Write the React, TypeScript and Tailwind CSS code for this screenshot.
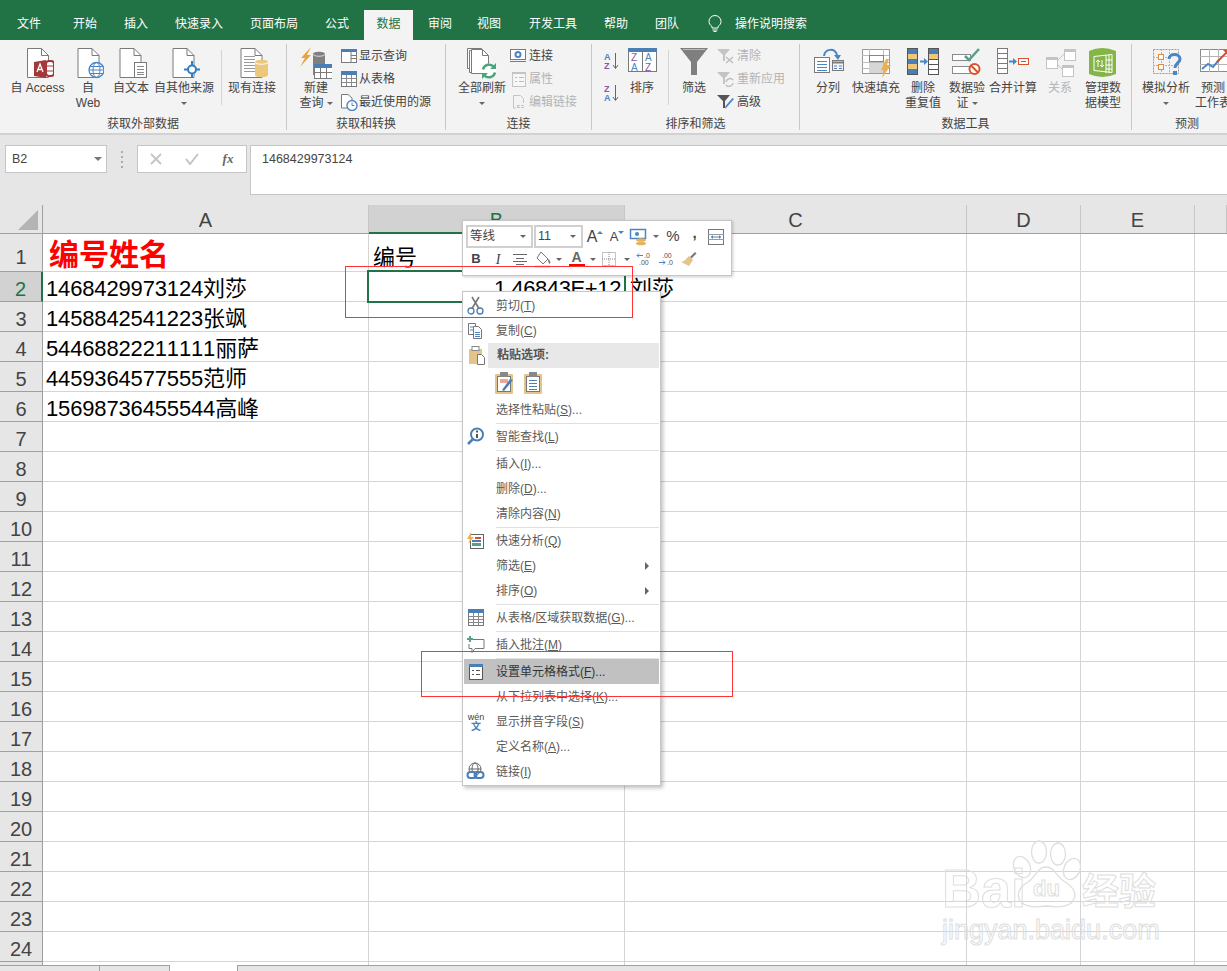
import React from 'react';

const font = "Liberation Sans";

const Svg = ({ w = 32, h = 32, children }: { w?: number; h?: number; children: React.ReactNode }) => (
  <svg width={w} height={h} viewBox={`0 0 ${w} ${h}`} fill="none" className="shrink-0 block">
    {children}
  </svg>
);

const Caret = () => (
  <span className="inline-block w-0 h-0 border-x-[3px] border-t-[3px] border-x-transparent border-t-[#666] align-middle" />
);

// page outline used by the "get data" icons
const Page = ({ x = 5.5, w = 21 }: { x?: number; w?: number }) => (
  <>
    <path d={`M${x} 1.5H${x + w - 7}L${x + w} 8.5V30.5H${x}Z`} fill="#fff" stroke="#7a7a7a" />
    <path d={`M${x + w - 7} 1.5V8.5H${x + w}`} stroke="#7a7a7a" />
  </>
);

const lines = (x: number, x2: number, ys: number[], color = '#4a86c5') =>
  ys.map((y) => <path key={y} d={`M${x} ${y}.5H${x2}`} stroke={color} />);

const IconAccess = () => (
  <Svg>
    <Page />
    <rect x="24" y="14" width="8" height="15" rx="3" fill="#fff" stroke="#a4373a" strokeWidth="2" />
    <path d="M24 19h8M24 24h8" stroke="#a4373a" />
    <path d="M12 15l12-2v18l-12-2z" fill="#a4373a" />
    <path d="M15 25l3-8 3 8M16 22.500h4" stroke="#fff" strokeWidth="1.300" />
  </Svg>
);
const IconWeb = () => (
  <Svg>
    <Page x={6} />
    <circle cx="24.500" cy="23" r="7.500" fill="#fff" stroke="#4a86c5" strokeWidth="1.300" />
    <ellipse cx="24.500" cy="23" rx="3.500" ry="7.500" stroke="#4a86c5" />
    <path d="M17 23h15M18 19.500h13M18 26.500h13" stroke="#4a86c5" />
  </Svg>
);
const IconText = () => (
  <Svg>
    <Page x={5} />
    <rect x="19.500" y="15.500" width="12" height="15" fill="#fff" stroke="#7a7a7a" />
    {lines(22, 29, [19, 22, 25, 27], '#8a8a8a')}
  </Svg>
);
const IconOther = () => (
  <Svg>
    <Page x={5} />
    <path d="M24 14v4M24 27v4M16 22.500h4M28 22.500h4" stroke="#2f7fc4" strokeWidth="2" />
    <circle cx="24" cy="22.500" r="4" fill="#fff" stroke="#2f7fc4" strokeWidth="2" />
  </Svg>
);
const IconExisting = () => (
  <Svg>
    <Page x={5} />
    {lines(8, 19, [9, 12, 15, 18, 21, 24], '#9a9a9a')}
    <path d="M19 15c0-3 13-3 13 0v13c0 3-13 3-13 0z" fill="#edc77b" />
    <path d="M19 15c0 3 13 3 13 0" stroke="#fff" />
  </Svg>
);
const IconNewQuery = () => (
  <Svg>
    <path d="M11 0L1 11h4L0 20 11 8H7z" fill="#e8a33d" />
    <path d="M13 7c0-3 12-3 12 0v21H13z" fill="#808080" />
    <path d="M13 7c0 3 12 3 12 0" stroke="#d8d8d8" />
    <rect x="14.500" y="18.500" width="18" height="13" fill="#fff" stroke="#7a7a7a" />
    <rect x="14" y="17" width="19" height="4" fill="#4a7fb5" />
    <path d="M20.500 21v10M26.500 21v10M15 25.500h17" stroke="#7a7a7a" />
  </Svg>
);
const IconShowQuery = () => (
  <Svg w={18} h={16}>
    <rect x="1.500" y="2.500" width="15" height="12" fill="#fff" stroke="#7a7a7a" />
    <rect x="1" y="1" width="16" height="3" fill="#4a7fb5" />
    <path d="M11 4v10M11 7.500h5M11 10.500h5" stroke="#7a7a7a" />
  </Svg>
);
const IconFromTable = () => (
  <Svg w={18} h={16}>
    <rect x="1.500" y="1.500" width="15" height="14" fill="#fff" stroke="#7a7a7a" />
    <rect x="1" y="0" width="16" height="4" fill="#4a7fb5" />
    <path d="M6.500 4v11M11.500 4v11M2 7.500h14M2 11.500h14" stroke="#8a8a8a" />
  </Svg>
);
const IconRecent = () => (
  <Svg w={18} h={18}>
    <path d="M1.500 1.500H8L12 5V15H1.500z" fill="#fff" stroke="#7a7a7a" />
    <circle cx="12" cy="12.500" r="5" fill="#fff" stroke="#4a86c5" strokeWidth="1.400" />
    <path d="M12 9.500v3h2.500" stroke="#4a86c5" />
  </Svg>
);
const IconRefreshAll = () => (
  <Svg>
    <path d="M1.500 1.500h14v20h-14z" fill="#fff" stroke="#7a7a7a" />
    <path d="M3.500 3.500h14v22h-14z" fill="#fff" stroke="#7a7a7a" />
    <path d="M5.500 2.500h11l6 6v18h-17z" fill="#fff" stroke="#7a7a7a" />
    <path d="M16.500 2.500v6h6" stroke="#7a7a7a" />
    <circle cx="23" cy="24" r="7.500" fill="#fff" />
    <path d="M17 22.500a6.300 6.300 0 0 1 11-2.500M29 25.500a6.300 6.300 0 0 1-11 2.500" stroke="#4ca47c" strokeWidth="2.500" />
    <path d="M30 16v6h-6zM16 32v-6h6z" fill="#4ca47c" />
  </Svg>
);
const IconConn = () => (
  <Svg w={20} h={16}>
    <rect x="2.500" y="1.500" width="15" height="10" fill="#fff" stroke="#7a7a7a" />
    <path d="M7 13.500h6M2 13.500h16" stroke="#7a7a7a" />
    <circle cx="10" cy="6.500" r="2.500" stroke="#4a86c5" strokeWidth="2" />
  </Svg>
);
const IconProps = () => (
  <Svg w={20} h={16}>
    <rect x="4.500" y="1.500" width="13" height="14" fill="#f7f7f7" stroke="#c4c4c4" />
    <rect x="4" y="1" width="14" height="2" fill="#c4c4c4" />
    <path d="M7 6.500h2M7 10.500h2M11 6.500h5M11 10.500h5" stroke="#bdbdbd" />
  </Svg>
);
const IconEditLink = () => (
  <Svg w={20} h={16}>
    <path d="M5.500 1.500h7l3 3V9M5.500 1.500V14H8" stroke="#c4c4c4" />
    <path d="M9 12.500h3M13 12.500h3" stroke="#c4c4c4" strokeWidth="3" />
    <path d="M10 12.500h6" stroke="#f3f3f3" />
  </Svg>
);
const IconAZ = ({ flip }: { flip?: boolean }) => (
  <Svg w={16} h={18}>
    <text x="0" y="8" fontFamily={font} fontSize="9" fontWeight="bold" fill={flip ? '#8c55a8' : '#4a86c5'}>{flip ? 'Z' : 'A'}</text>
    <text x="0" y="17" fontFamily={font} fontSize="9" fontWeight="bold" fill={flip ? '#4a86c5' : '#8c55a8'}>{flip ? 'A' : 'Z'}</text>
    <path d="M11.500 1v15M9 13l2.500 3.500L14 13" stroke="#666" />
  </Svg>
);
const IconSort = () => (
  <Svg>
    <rect x="2.500" y="3.500" width="28" height="21" fill="#fff" stroke="#7a7a7a" />
    <rect x="2" y="1" width="29" height="4" fill="#4a7fb5" />
    <path d="M16.500 5v20" stroke="#7a7a7a" />
    <text x="5" y="14" fontFamily={font} fontSize="10" fill="#8c55a8">Z</text>
    <text x="5" y="24" fontFamily={font} fontSize="10" fill="#4a86c5">A</text>
    <text x="19" y="14" fontFamily={font} fontSize="10" fill="#4a86c5">A</text>
    <text x="19" y="24" fontFamily={font} fontSize="10" fill="#8c55a8">Z</text>
  </Svg>
);
const IconFilter = () => (
  <Svg>
    <path d="M2 1h28L19 15v13h-6V15z" fill="#7f7f7f" />
    <path d="M5 2.500h22" stroke="#bbb" />
  </Svg>
);
const IconClear = () => (
  <Svg w={20} h={16}>
    <path d="M1 1h13L9 7v6H7V7z" fill="#c4c4c4" />
    <path d="M10 9l7 6M17 9l-7 6" stroke="#bdbdbd" strokeWidth="1.500" />
  </Svg>
);
const IconReapply = () => (
  <Svg w={20} h={16}>
    <path d="M1 1h13L9 7v6H7V7z" fill="#c4c4c4" />
    <path d="M10 11a4 4 0 0 1 7-2M17 12a4 4 0 0 1-7 2" stroke="#bdbdbd" strokeWidth="1.500" />
  </Svg>
);
const IconAdvanced = () => (
  <Svg w={20} h={16}>
    <path d="M1 1h13L9 7v7H7V7z" fill="#555" />
    <path d="M18 5l-7 8-2 2 .5-3 7-8z" fill="#4a86c5" />
  </Svg>
);
const IconSplit = () => (
  <Svg>
    <rect x="2.500" y="10.500" width="15" height="15" fill="#fff" stroke="#7a7a7a" />
    {lines(5, 15, [14, 17, 20, 23])}
    <rect x="20.500" y="13.500" width="11" height="10" fill="#f3f3f3" stroke="#7a7a7a" />
    <path d="M21 15.500h10" stroke="#7a7a7a" strokeWidth="2" />
    <path d="M22 19h3M27 19h3M22 21.500h3M27 21.500h3" stroke="#4a86c5" />
    <path d="M12 9c1-8 11-8 13-1" stroke="#4a86c5" strokeWidth="2" />
    <path d="M22 8h7l-3 5z" fill="#4a86c5" />
  </Svg>
);
const IconFlashFill = () => (
  <Svg>
    <rect x="2.500" y="2.500" width="27" height="24" fill="#fff" stroke="#9a9a9a" />
    <path d="M9.500 2v24M23.500 2v24M2 8.500h27M2 15.500h27M2 21.500h27" stroke="#bbb" />
    <rect x="9.500" y="8.500" width="14" height="6" fill="#fff" stroke="#4ca47c" />
    <rect x="9" y="16" width="14" height="10" fill="#d6d6d6" />
    <path d="M26 12l-5 11h3l-2 8 9-13h-4l2-6z" fill="#edb04e" />
  </Svg>
);
const IconDedupe = () => (
  <Svg>
    <rect x=".5" y="1.500" width="10" height="26" fill="#fff" stroke="#555" />
    <rect x="1" y="2" width="9" height="5" fill="#4a7fb5" />
    <rect x="1" y="7" width="9" height="5" fill="#edc77b" />
    <rect x="1" y="12" width="9" height="5" fill="#4a7fb5" />
    <rect x="1" y="17" width="9" height="5" fill="#edc77b" />
    <rect x="1" y="22" width="9" height="5" fill="#4a7fb5" />
    <path d="M13 14.500h5" stroke="#4a86c5" strokeWidth="2" />
    <path d="M17 11l4 3.500-4 3.500z" fill="#4a86c5" />
    <rect x="21.500" y="1.500" width="10" height="26" fill="#fff" stroke="#555" />
    <rect x="22" y="2" width="9" height="5" fill="#4a7fb5" />
    <rect x="22" y="7" width="9" height="5" fill="#edc77b" />
    <path d="M22 12.500h9M22 17.500h9M22 22.500h9" stroke="#555" />
  </Svg>
);
const IconValidate = () => (
  <Svg>
    <rect x="1.500" y="7.500" width="18" height="6" fill="#fff" stroke="#8a8a8a" />
    <rect x="1.500" y="19.500" width="18" height="7" fill="#fff" stroke="#8a8a8a" />
    <path d="M14 9l4 4 10-11" stroke="#5a9e8f" strokeWidth="2.500" />
    <circle cx="23.500" cy="22" r="5" fill="#fff" stroke="#d9512c" strokeWidth="2" />
    <path d="M20 18.500l7 7" stroke="#d9512c" strokeWidth="2" />
  </Svg>
);
const IconConsolidate = () => (
  <Svg>
    <rect x=".5" y="1.500" width="10" height="25" fill="#fff" stroke="#7a7a7a" />
    <path d="M1 6.500h9M1 11.500h9M1 16.500h9M1 21.500h9" stroke="#7a7a7a" />
    <path d="M12 14.500h5" stroke="#4a86c5" strokeWidth="2" />
    <path d="M16 11l4 3.500-4 3.500z" fill="#4a86c5" />
    <rect x="21.500" y="11.500" width="10" height="6" fill="#fff" stroke="#d9512c" />
    <path d="M24 14.500h5" stroke="#d9512c" />
  </Svg>
);
const IconRelations = () => (
  <Svg>
    <path d="M14 13l6-6M14 18l5 5" stroke="#c4c4c4" />
    <rect x="2.500" y="10.500" width="11" height="11" fill="#fff" stroke="#c4c4c4" />
    <rect x="2" y="10" width="12" height="3" fill="#c4c4c4" />
    <rect x="20.500" y="2.500" width="11" height="11" fill="#fff" stroke="#c4c4c4" />
    <rect x="20" y="2" width="12" height="3" fill="#c4c4c4" />
    <rect x="18.500" y="18.500" width="11" height="11" fill="#fff" stroke="#c4c4c4" />
    <rect x="18" y="18" width="12" height="3" fill="#c4c4c4" />
  </Svg>
);
const IconDataModel = () => (
  <Svg>
    <path d="M2 4Q15-2 29 4V27Q15 33 2 27Z" fill="#84b546" />
    <path d="M7 9.500L25 7.500V25.500L7 23.500Z" stroke="#fff" />
    <path d="M19 8v18M22 8v18M19 13h6M19 18h6M19 22h6" stroke="#fff" />
    <path d="M11 20v-7l-2 2M11 13l2 2M15 13v7l-2-2M15 20l2-2" stroke="#fff" />
  </Svg>
);
const IconWhatIf = () => (
  <Svg>
    <rect x="3.500" y="2.500" width="25" height="24" stroke="#9a9a9a" strokeDasharray="2 1" />
    <path d="M11.500 2v24M19.500 2v24M3 10.500h25M3 18.500h25" stroke="#b4b4b4" strokeDasharray="2 1" />
    <rect x="8.500" y="7.500" width="5" height="5" fill="#fff" stroke="#e08a3a" />
    <rect x="8.500" y="17.500" width="5" height="5" fill="#fff" stroke="#e08a3a" />
    <path d="M19 12c0-6 11-6 11 0 0 4-5 4-5 9" stroke="#4a86c5" strokeWidth="3" fill="#f3f3f3" />
    <rect x="23" y="24" width="4" height="4" fill="#4a86c5" />
  </Svg>
);
const IconForecast = () => (
  <Svg>
    <rect x="3.500" y="2.500" width="27" height="22" fill="#fff" stroke="#8a8a8a" />
    <path d="M12.500 2v23M21.500 2v23M3 9.500h27M3 17.500h27" stroke="#b4b4b4" />
    <path d="M5 22l6-5 5 3 6-7" stroke="#4a86c5" strokeWidth="2" />
    <path d="M20 15l5-5 5-5" stroke="#d9512c" strokeWidth="2" />
    <path d="M26 3h6v6z" fill="#d9512c" />
  </Svg>
);

const Big = ({ w, icon, a, b, caret, off }: { w: string; icon: React.ReactNode; a: string; b?: string; caret?: boolean; off?: boolean }) => (
  <div className={`flex flex-col items-center shrink-0 pt-[7px] ${w}`}>
    {icon}
    <div className={`mt-[2px] leading-[15px] whitespace-nowrap ${off ? 'text-[#b4b4b4]' : ''}`}>{a}</div>
    <div className="leading-[15px] whitespace-nowrap">
      {b}
      {caret && <span className={b ? 'ml-[3px]' : ''}><Caret /></span>}
    </div>
  </div>
);

const Small = ({ icon, text, off }: { icon: React.ReactNode; text: string; off?: boolean }) => (
  <div className="flex items-center gap-[1px] h-[23px]">
    {icon}
    <span className={`whitespace-nowrap ${off ? 'text-[#b4b4b4]' : ''}`}>{text}</span>
  </div>
);

const Group = ({ w, label, children }: { w: string; label: string; children: React.ReactNode }) => (
  <div className={`flex flex-col shrink-0 ${w}`}>
    <div className="flex h-[77px]">{children}</div>
    <div className="text-center leading-[15px] whitespace-nowrap">{label}</div>
  </div>
);

const Sep = () => <div className="w-px h-[86px] mt-[4px] bg-[#c8c8c8] shrink-0" />;
const InnerSep = ({ w }: { w: string }) => (
  <div className={`flex justify-center shrink-0 ${w}`}>
    <div className="w-px h-[55px] mt-[10px] bg-[#d4d4d4]" />
  </div>
);

const tabs: [string, string][] = [
  ['文件', 'w-[58px]'], ['开始', 'w-[54px]'], ['插入', 'w-[48px]'], ['快速录入', 'w-[78px]'], ['页面布局', 'w-[72px]'], ['公式', 'w-[54px]'],
  ['数据', 'w-[49px]'], ['审阅', 'w-[54px]'], ['视图', 'w-[44px]'], ['开发工具', 'w-[84px]'], ['帮助', 'w-[42px]'], ['团队', 'w-[60px]'],
];

const Ribbon = () => (
  <div className="flex h-[95px] bg-[#f3f3f3] border-b-2 border-[#d2d2d2] text-[12px] text-[#444]">
    <Group w="w-[286px]" label="获取外部数据">
      <div className="w-[5px] shrink-0" />
      <Big w="w-[65px]" icon={<IconAccess />} a="自 Access" />
      <Big w="w-[36px]" icon={<IconWeb />} a="自" b="Web" />
      <Big w="w-[50px]" icon={<IconText />} a="自文本" />
      <Big w="w-[56px]" icon={<IconOther />} a="自其他来源" caret />
      <InnerSep w="w-[18px]" />
      <Big w="w-[44px]" icon={<IconExisting />} a="现有连接" />
    </Group>
    <Sep />
    <Group w="w-[158px]" label="获取和转换">
      <div className="w-[4px] shrink-0" />
      <Big w="w-[50px]" icon={<IconNewQuery />} a="新建" b="查询" caret />
      <div className="-ml-px pt-[4px]">
        <Small icon={<IconShowQuery />} text="显示查询" />
        <Small icon={<IconFromTable />} text="从表格" />
        <Small icon={<IconRecent />} text="最近使用的源" />
      </div>
    </Group>
    <Sep />
    <Group w="w-[145px]" label="连接">
      <div className="w-[10px] shrink-0" />
      <Big w="w-[52px]" icon={<IconRefreshAll />} a="全部刷新" caret />
      <div className="pt-[4px]">
        <Small icon={<IconConn />} text="连接" />
        <Small icon={<IconProps />} text="属性" off />
        <Small icon={<IconEditLink />} text="编辑链接" off />
      </div>
    </Group>
    <Sep />
    <Group w="w-[207px]" label="排序和筛选">
      <div className="w-[12px] shrink-0" />
      <div className="flex flex-col gap-[14px] pt-[12px] w-[16px] shrink-0">
        <IconAZ />
        <IconAZ flip />
      </div>
      <Big w="w-[44px]" icon={<IconSort />} a="排序" />
      <InnerSep w="w-[8px]" />
      <Big w="w-[44px]" icon={<IconFilter />} a="筛选" />
      <div className="pt-[4px]">
        <Small icon={<IconClear />} text="清除" off />
        <Small icon={<IconReapply />} text="重新应用" off />
        <Small icon={<IconAdvanced />} text="高级" />
      </div>
    </Group>
    <Sep />
    <Group w="w-[331px]" label="数据工具">
      <div className="w-[8px] shrink-0" />
      <Big w="w-[40px]" icon={<IconSplit />} a="分列" />
      <Big w="w-[56px]" icon={<IconFlashFill />} a="快速填充" />
      <Big w="w-[38px]" icon={<IconDedupe />} a="删除" b="重复值" />
      <Big w="w-[50px]" icon={<IconValidate />} a="数据验" b="证" caret />
      <Big w="w-[42px]" icon={<IconConsolidate />} a="合并计算" />
      <Big w="w-[52px]" icon={<IconRelations />} a="关系" off />
      <Big w="w-[34px]" icon={<IconDataModel />} a="管理数" b="据模型" />
    </Group>
    <Sep />
    <Group w="w-[110px]" label="预测">
      <div className="w-[12px] shrink-0" />
      <Big w="w-[44px]" icon={<IconWhatIf />} a="模拟分析" caret />
      <Big w="w-[50px]" icon={<IconForecast />} a="预测" b="工作表" />
    </Group>
  </div>
);

const FormulaBar = () => (
  <div className="flex h-[70px] bg-[#e6e6e6] pt-[10px] pl-[5px] text-[#444]">
    <div className="flex items-center justify-between w-[102px] h-[28px] bg-white border border-[#c6c6c6] pl-[6px] pr-[4px] text-[12.500px]">
      <span>B2</span>
      <span className="w-0 h-0 border-x-[4px] border-t-[4px] border-x-transparent border-t-[#777]" />
    </div>
    <div className="flex flex-col gap-[3px] justify-center items-center w-[30px] h-[28px]">
      <i className="w-[2px] h-[2px] bg-[#aaa]" />
      <i className="w-[2px] h-[2px] bg-[#aaa]" />
      <i className="w-[2px] h-[2px] bg-[#aaa]" />
      <i className="w-[2px] h-[2px] bg-[#aaa]" />
    </div>
    <div className="flex items-center w-[110px] h-[28px] bg-white border border-[#c6c6c6]">
      <div className="w-[36px] flex justify-center">
        <Svg w={12} h={12}><path d="M1 1l10 10M11 1L1 11" stroke="#c4c4c4" strokeWidth="1.800" /></Svg>
      </div>
      <div className="w-[36px] flex justify-center">
        <Svg w={14} h={12}><path d="M1 6l4 5 8-10" stroke="#c4c4c4" strokeWidth="2" /></Svg>
      </div>
      <div className="w-[36px] text-center italic font-['Liberation_Serif',serif] font-bold text-[13px] text-[#666]">fx</div>
    </div>
    <div className="ml-[3px] flex-1 h-[50px] bg-white border border-[#c6c6c6] border-r-0 pl-[11px] pt-[6px] text-[12.500px] leading-[15px]">
      1468429973124
    </div>
  </div>
);

const cols: [string, string][] = [
  ['A', 'w-[326px]'], ['B', 'w-[256px]'], ['C', 'w-[342px]'], ['D', 'w-[114px]'], ['E', 'w-[114px]'], ['F', 'flex-1'],
];

const ColumnHeader = () => (
  <div className="flex h-[29px] bg-[#e6e6e6] text-[20px] text-[#444] border-b border-[#a0a0a0] shrink-0">
    <div className="relative w-[43px] border-r border-[#a0a0a0] shrink-0">
      <Svg w={42} h={28}>
        <path d="M38 5V25H18Z" fill="#b4b4b4" />
      </Svg>
    </div>
    {cols.map(([c, w]) => (
      <div
        key={c}
        className={`${w} text-center leading-[30px] border-r border-[#c6c6c6] ${c === 'B' ? 'bg-[#d2d2d2] text-[#217346] border-b-2 border-b-[#217346] h-[29px]' : ''}`}
      >
        {c === 'F' ? '' : c}
      </div>
    ))}
  </div>
);

const rowsData: Record<number, string[]> = {
  2: ['1468429973124刘莎', '1.46843E+12', '刘莎'],
  3: ['1458842541223张飒'],
  4: ['54468822211111丽萨'],
  5: ['4459364577555范师'],
  6: ['15698736455544高峰'],
};

const Row = ({ n }: { n: number }) => {
  const d = rowsData[n] ?? [];
  const h = n === 1 ? 'h-[38px]' : 'h-[30px]';
  const lh = n === 1 ? 'leading-[27px]' : 'leading-[24px]';
  const active = n === 2;
  return (
    <div className={`flex shrink-0 ${h}`}>
      <div
        className={`w-[43px] shrink-0 text-center text-[20px] ${lh} flex items-end justify-center border-b border-r border-[#a0a0a0] ${
          active ? 'bg-[#d2d2d2] text-[#217346] border-r-2 border-r-[#217346]' : 'bg-[#e6e6e6] text-[#444]'
        }`}
      >
        {n < 25 ? n : ''}
      </div>
      <div className={`w-[326px] shrink-0 border-b border-r border-[#d4d4d4] flex items-end pl-[3px] text-[22px] ${lh} tracking-[-0.15px] [font-kerning:none] whitespace-nowrap text-black`}>
        {n === 1 ? <span className="pl-[3px] text-[30px] leading-[32px] font-bold tracking-normal text-[#ff0000]">编号姓名</span> : d[0]}
      </div>
      <div className={`w-[256px] shrink-0 border-b border-r border-[#d4d4d4] flex items-end text-[22px] ${lh} whitespace-nowrap ${active ? 'justify-end pr-[3px] tracking-[-0.4px]' : 'pl-[4px]'}`}>
        {n === 1 ? '编号' : d[1]}
      </div>
      <div className={`w-[342px] shrink-0 border-b border-r border-[#d4d4d4] flex items-end pl-[5px] text-[22px] ${lh} whitespace-nowrap`}>
        {d[2]}
      </div>
      <div className="w-[114px] shrink-0 border-b border-r border-[#d4d4d4]" />
      <div className="w-[114px] shrink-0 border-b border-r border-[#d4d4d4]" />
      <div className="flex-1 border-b border-[#d4d4d4]" />
    </div>
  );
};

const SheetTabs = () => (
  <div className="flex h-[6px] shrink-0">
    <div className="w-[170px] bg-[#e6e6e6] border-t border-r border-[#a0a0a0] flex">
      <div className="w-[100px] border-r border-[#a0a0a0]" />
    </div>
    <div className="w-[67px] bg-white" />
    <div className="flex-1 bg-[#e6e6e6] border-t border-l border-[#a0a0a0]" />
  </div>
);

const MiniCell = ({ w, children }: { w: string; children: React.ReactNode }) => (
  <div className={`flex items-center justify-center shrink-0 h-[24px] ${w}`}>{children}</div>
);

const Up = ({ down }: { down?: boolean }) => (
  <span className={`w-0 h-0 border-x-[3px] border-x-transparent mb-[9px] ${down ? 'border-t-[3px] border-t-[#4a86c5]' : 'border-b-[3px] border-b-[#4a86c5]'}`} />
);

const Select = ({ w, text }: { w: string; text: string }) => (
  <div className={`flex items-center justify-between h-[23px] mr-px shrink-0 border-2 border-[#d0d0d0] pl-[2px] pr-[5px] text-[12.500px] ${w}`}>
    <span>{text}</span>
    <Caret />
  </div>
);

const MiniToolbar = () => (
  <div className="absolute left-[462px] top-[220px] w-[270px] h-[56px] bg-white border border-[#c6c6c6] shadow-[1px_1px_3px_rgba(0,0,0,0.2)] text-[#444]">
    <div className="flex items-center pl-[3px] pt-[3px] h-[28px]">
      <Select w="w-[67px]" text="等线" />
      <Select w="w-[49px]" text="11" />
      <MiniCell w="w-[22px]"><span className="text-[16px]">A</span><Up /></MiniCell>
      <MiniCell w="w-[22px]"><span className="text-[13px]">A</span><Up down /></MiniCell>
      <MiniCell w="w-[22px]">
        <Svg w={20} h={18}>
          <rect x="1.500" y="1.500" width="15" height="9" fill="#fff" stroke="#4a86c5" strokeWidth="1.500" />
          <circle cx="8" cy="6" r="2" fill="#4a86c5" />
          <ellipse cx="12" cy="12" rx="5" ry="1.800" fill="#e3b45e" />
          <ellipse cx="12" cy="15.500" rx="5" ry="1.800" fill="#e3b45e" />
        </Svg>
      </MiniCell>
      <MiniCell w="w-[12px]"><Caret /></MiniCell>
      <MiniCell w="w-[22px]"><span className="text-[15px]">%</span></MiniCell>
      <MiniCell w="w-[21px]"><span className="text-[15px] font-bold leading-[14px] mb-[8px]">,</span></MiniCell>
      <MiniCell w="w-[22px]">
        <Svg w={16} h={16}>
          <rect x=".5" y=".5" width="15" height="15" stroke="#777" />
          <path d="M0 5.500h16M0 10.500h16" stroke="#999" />
          <path d="M3 8h10" stroke="#4a86c5" />
          <path d="M3 8l2-2v4zM13 8l-2-2v4z" fill="#4a86c5" />
        </Svg>
      </MiniCell>
    </div>
    <div className="flex items-center pl-[2px] h-[20px] text-[12px]">
      <MiniCell w="w-[22px]"><b className="font-bold text-[13px]">B</b></MiniCell>
      <MiniCell w="w-[22px]"><i className="italic font-['Liberation_Serif',serif] text-[14px]">I</i></MiniCell>
      <MiniCell w="w-[22px]">
        <Svg w={14} h={12}><path d="M0 1.500h14M3 5.500h8M0 8.500h14M3 11.500h8" stroke="#666" /></Svg>
      </MiniCell>
      <MiniCell w="w-[24px]">
        <Svg w={18} h={17}>
          <path d="M7 1l7 7-5 5-6-6z" fill="#fff" stroke="#777" />
          <path d="M14 8c2 1 3 3 2 5-2-1-2-3-2-5" fill="#777" />
          <rect x="1" y="14" width="15" height="3" fill="#ffff00" />
        </Svg>
      </MiniCell>
      <MiniCell w="w-[8px]"><Caret /></MiniCell>
      <MiniCell w="w-[27px]">
        <div className="flex flex-col items-center">
          <span className="text-[14px] leading-[13px] font-bold text-[#666]">A</span>
          <span className="w-[16px] h-[3px] bg-[#ff0000]" />
        </div>
      </MiniCell>
      <MiniCell w="w-[6px]"><Caret /></MiniCell>
      <MiniCell w="w-[26px]">
        <Svg w={14} h={14}>
          <rect x=".5" y=".5" width="13" height="13" stroke="#888" strokeDasharray="1 1" />
          <path d="M7 0v14M0 7h14" stroke="#888" strokeDasharray="1 1" />
        </Svg>
      </MiniCell>
      <MiniCell w="w-[10px]"><Caret /></MiniCell>
      <MiniCell w="w-[24px]">
        <Svg w={16} h={14}>
          <text x="8" y="6" fontFamily={font} fontSize="7" fill="#555">.0</text>
          <text x="3" y="13" fontFamily={font} fontSize="7" fill="#555">.00</text>
          <path d="M1 3.500h6M1 3.500l2-2M1 3.500l2 2" stroke="#4a86c5" />
        </Svg>
      </MiniCell>
      <MiniCell w="w-[22px]">
        <Svg w={16} h={14}>
          <text x="3" y="6" fontFamily={font} fontSize="7" fill="#555">.00</text>
          <text x="8" y="13" fontFamily={font} fontSize="7" fill="#555">.0</text>
          <path d="M0 10.500h6M6 10.500l-2-2M6 10.500l-2 2" stroke="#4a86c5" />
        </Svg>
      </MiniCell>
      <MiniCell w="w-[22px]">
        <Svg w={16} h={16}>
          <path d="M9 6l5-5 1.500 1.500-5 5z" fill="#777" />
          <path d="M8 5l4 4-4 6-8-4 3-1z" fill="#e3c48a" />
        </Svg>
      </MiniCell>
    </div>
  </div>
);

const MenuItem = ({ label, k, tail = ')', icon, arrow, hover }: { label: string; k: string; tail?: string; icon?: React.ReactNode; arrow?: boolean; hover?: boolean }) => (
  <div className={`flex items-center h-[25px] mx-px pr-[10px] ${hover ? 'bg-[#c1c1c1] text-[#333]' : ''}`}>
    <div className="w-[32px] pl-[2px] shrink-0">{icon}</div>
    <span className="whitespace-nowrap">
      {label}(<span className="underline">{k}</span>{tail}
    </span>
    {arrow && <span className="ml-auto w-0 h-0 border-y-[4px] border-l-[4px] border-y-transparent border-l-[#666]" />}
  </div>
);

const MenuSep = () => <div className="h-[2px] ml-[33px] mr-px border-b border-[#e0e0e0]" />;

const ClipIcon = ({ children }: { children: React.ReactNode }) => (
  <Svg w={20} h={24}>
    <rect x="1" y="3" width="18" height="20" rx="1" fill="#e3c48a" />
    <rect x="3.500" y="5.500" width="13" height="15" fill="#fff" stroke="#777" />
    <rect x="6" y="1" width="8" height="5" fill="#888" />
    {children}
  </Svg>
);

const ContextMenu = () => (
  <div className="absolute left-[462px] top-[291px] w-[199px] h-[495px] bg-white border border-[#c6c6c6] shadow-[2px_2px_4px_rgba(0,0,0,0.25)] text-[12px] text-[#5a5a5a] pt-[1px]">
    <MenuItem
      label="剪切"
      k="T"
      icon={
        <Svg w={20} h={20}>
          <circle cx="5" cy="15" r="3" stroke="#4a7fb5" strokeWidth="1.300" />
          <circle cx="14" cy="15" r="3" stroke="#4a7fb5" strokeWidth="1.300" />
          <path d="M6 12.500L13 1M13 12.500L6 1" stroke="#777" strokeWidth="1.600" />
        </Svg>
      }
    />
    <MenuItem
      label="复制"
      k="C"
      icon={
        <Svg w={20} h={20}>
          <path d="M2.500 2.500h7v11h-7z" fill="#fff" stroke="#777" />
          <path d="M7.500 5.500h5l3 3v9h-8z" fill="#fff" stroke="#777" />
          <path d="M9 11.500h5M9 13.500h5M9 15.500h5M4 6h3M4 9h3" stroke="#4a86c5" />
        </Svg>
      }
    />
    <div className="flex h-[25px]">
      <div className="w-[25px] pl-[5px] pt-[2px] shrink-0">
        <Svg w={20} h={20}>
          <rect x="1" y="4" width="13" height="15" fill="#e3c48a" />
          <rect x="4" y="1.500" width="7" height="4" fill="#fff" stroke="#888" />
          <path d="M9.500 9.500h4l3 3v7h-7z" fill="#fff" stroke="#777" />
        </Svg>
      </div>
      <div className="flex-1 mr-px bg-[#e8e8e8] pl-[9px] leading-[25px] font-bold text-[#555]">粘贴选项:</div>
    </div>
    <div className="flex gap-[9px] pl-[31px] pt-[3px] h-[29px]">
      <ClipIcon>
        <path d="M6 9h8M6 11h8" stroke="#d9512c" />
        <path d="M19 9l-9 11-2-1 8-11z" fill="#4a7fb5" />
      </ClipIcon>
      <ClipIcon>
        <path d="M6 9.500h8M6 12.500h8M6 15.500h8M6 18.500h8" stroke="#4a7fb5" />
      </ClipIcon>
    </div>
    <MenuItem label="选择性粘贴" k="S" tail=")..." />
    <MenuSep />
    <MenuItem
      label="智能查找"
      k="L"
      icon={
        <Svg w={20} h={20}>
          <circle cx="11" cy="7.500" r="6" fill="#fff" stroke="#4a7fb5" strokeWidth="2" />
          <path d="M7 12l-5 5" stroke="#4a7fb5" strokeWidth="2.500" />
          <path d="M11 7v4" stroke="#555" strokeWidth="2" />
          <rect x="10" y="3.500" width="2" height="2" fill="#555" />
        </Svg>
      }
    />
    <MenuSep />
    <MenuItem label="插入" k="I" tail=")..." />
    <MenuItem label="删除" k="D" tail=")..." />
    <MenuItem label="清除内容" k="N" />
    <MenuSep />
    <MenuItem
      label="快速分析"
      k="Q"
      icon={
        <Svg w={20} h={20}>
          <rect x="4.500" y="3.500" width="13" height="14" fill="#fff" stroke="#666" />
          <rect x="9" y="6" width="6" height="2" fill="#d9512c" />
          <rect x="6" y="9" width="9" height="2" fill="#4a7fb5" />
          <rect x="6" y="12" width="9" height="3" fill="#5a9e8f" />
          <path d="M5 1L1 8h3l-2 5 6-7H5z" fill="#edb04e" />
        </Svg>
      }
    />
    <MenuItem label="筛选" k="E" arrow />
    <MenuItem label="排序" k="O" arrow />
    <MenuSep />
    <MenuItem
      label="从表格/区域获取数据"
      k="G"
      tail=")..."
      icon={
        <Svg w={20} h={20}>
          <rect x="2.500" y="2.500" width="15" height="15" fill="#fff" stroke="#777" />
          <rect x="2" y="1" width="16" height="4" fill="#4a7fb5" />
          <path d="M7.500 5v12M12.500 5v12M3 8.500h14M3 11.500h14M3 14.500h14" stroke="#888" />
        </Svg>
      }
    />
    <MenuSep />
    <MenuItem
      label="插入批注"
      k="M"
      icon={
        <Svg w={20} h={20}>
          <path d="M6 4.500h12v9h-9l-3 4v-4H3V9" stroke="#777" />
          <path d="M4 1v6M1 4h6" stroke="#5a9e8f" strokeWidth="2" />
        </Svg>
      }
    />
    <MenuSep />
    <MenuItem
      label="设置单元格格式"
      k="F"
      tail=")..."
      hover
      icon={
        <Svg w={20} h={20}>
          <rect x="3.500" y="3.500" width="13" height="14" fill="#fff" stroke="#555" />
          <rect x="3" y="2" width="14" height="3" fill="#4a7fb5" />
          <path d="M6 8.500h2M6 12.500h2M10 8.500h4M10 12.500h4" stroke="#555" />
        </Svg>
      }
    />
    <MenuItem label="从下拉列表中选择" k="K" tail=")..." />
    <MenuItem
      label="显示拼音字段"
      k="S"
      icon={
        <div className="flex flex-col items-center w-[20px] leading-[9px]">
          <span className="text-[9px] text-[#444]">wén</span>
          <span className="text-[10px] text-[#4a7fb5] font-bold">文</span>
        </div>
      }
    />
    <MenuItem label="定义名称" k="A" tail=")..." />
    <MenuItem
      label="链接"
      k="I"
      icon={
        <Svg w={20} h={20}>
          <circle cx="9" cy="7" r="6" stroke="#666" />
          <ellipse cx="9" cy="7" rx="3" ry="6" stroke="#666" />
          <path d="M3 7h12" stroke="#666" />
          <rect x="1.500" y="10" width="9" height="6" rx="3" fill="#fff" stroke="#4a7fb5" strokeWidth="2" />
          <rect x="8.500" y="10" width="9" height="6" rx="3" stroke="#4a7fb5" strokeWidth="2" />
        </Svg>
      }
    />
  </div>
);

const Watermark = () => (
  <div className="absolute left-[940px] top-[838px] w-[225px] h-[110px] pointer-events-none text-transparent font-['Liberation_Sans',sans-serif]">
    <div className="absolute left-[2px] top-[22px] text-[54px] leading-[56px] font-bold [-webkit-text-stroke:1px_#dedede]">Bai</div>
    <div className="absolute left-[72px] top-0">
      <Svg w={74} h={74}>
        <g stroke="#dedede" strokeWidth="1.300">
          <ellipse cx="10" cy="29" rx="8" ry="11" transform="rotate(-25 10 29)" />
          <ellipse cx="27" cy="14" rx="7.500" ry="11" />
          <ellipse cx="46" cy="16" rx="7.500" ry="11" />
          <ellipse cx="60" cy="31" rx="8" ry="11" transform="rotate(25 60 31)" />
          <path d="M34 29c9 0 10 10 19 15 8 5 12 10 9 17-3 8-13 9-27 7-14 2-25 0-28-7-2-7 2-13 9-17 8-5 9-15 18-15z" />
        </g>
        <text x="21" y="58" fontFamily={font} fontSize="22" fontWeight="bold" stroke="#dedede" fill="none">du</text>
      </Svg>
    </div>
    <div className="absolute left-[142px] top-[30px] text-[37px] leading-[42px] font-bold font-['Noto_Sans_CJK_SC',sans-serif] [-webkit-text-stroke:1px_#dedede] whitespace-nowrap">经验</div>
    <div className="absolute left-[2px] top-[76px] text-[27px] leading-[32px] [-webkit-text-stroke:1px_#dedede] whitespace-nowrap">jingyan.baidu.com</div>
  </div>
);

export default function App() {
  return (
    <div className="relative flex flex-col w-[1227px] h-[971px] overflow-hidden bg-white font-['Liberation_Sans','Noto_Sans_CJK_SC',sans-serif]">
      {/* title bar and tabs */}
      <div className="flex items-end h-[40px] bg-[#217346] text-[12px] text-white">
        {tabs.map(([t, w]) => (
          <div key={t} className={`${w} h-[30px] pb-[3px] flex items-center justify-center ${t === '数据' ? 'bg-[#f3f3f3] text-[#217346]' : ''}`}>
            {t}
          </div>
        ))}
        <div className="flex items-center h-[30px] pb-[3px] pl-[11px] gap-[13px]">
          <Svg w={14} h={17}>
            <path d="M4 11.500C2 10 1 8.500 1 6.500a6 6 0 0 1 12 0c0 2-1 3.500-3 5v1.500H4zM4.500 15h5M5.500 16.500h3" stroke="#fff" />
          </Svg>
          <span>操作说明搜索</span>
        </div>
      </div>

      <Ribbon />
      <FormulaBar />
      <ColumnHeader />

      <div className="flex-1 overflow-hidden flex flex-col min-h-0">
        {Array.from({ length: 25 }, (_, i) => (
          <Row key={i} n={i + 1} />
        ))}
      </div>
      <SheetTabs />

      {/* selected cell B2 */}
      <div className="absolute left-[367px] top-[270px] w-[259px] h-[33px] border-2 border-[#217346]" />

      <Watermark />
      <MiniToolbar />
      <ContextMenu />

      {/* red annotation boxes */}
      <div className="absolute left-[345px] top-[266px] w-[288px] h-[52px] border border-[#ff3333]" />
      <div className="absolute left-[421px] top-[651px] w-[312px] h-[46px] border border-[#ff3333]" />
    </div>
  );
}
